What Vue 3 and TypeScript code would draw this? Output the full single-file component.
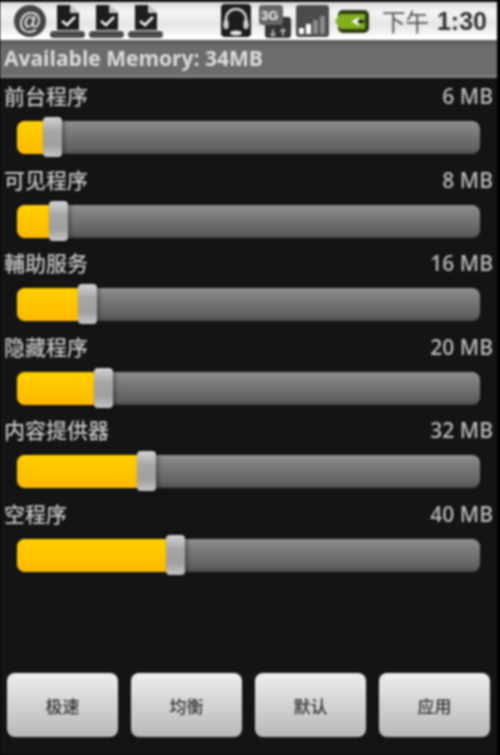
<script setup lang="ts">
const rows = [
  { name: '前台程序', value: '6 MB', thumb: 53 },
  { name: '可见程序', value: '8 MB', thumb: 59 },
  { name: '輔助服务', value: '16 MB', thumb: 88 },
  { name: '隐藏程序', value: '20 MB', thumb: 104 },
  { name: '内容提供器', value: '32 MB', thumb: 147 },
  { name: '空程序', value: '40 MB', thumb: 176 },
]
const buttons = ['极速', '均衡', '默认', '应用']
const docs = [0, 1, 2]
const bars = [
  { x: 3, y: 14, h: 6, c: '#fff' },
  { x: 10, y: 10, h: 10, c: '#fff' },
  { x: 17, y: 6, h: 14, c: '#8a8a8a' },
  { x: 24, y: 2, h: 18, c: '#8a8a8a' },
]
</script>

<template>
  <div class="screen">
    <header class="status">
      <div class="left-icons">
        <span class="at">@</span>
        <svg v-for="d in docs" :key="d" class="doc" viewBox="0 0 36 34" width="36" height="34">
          <path d="M7 1h13l9 8v17H7z" fill="#1c1c1c" />
          <path d="M20 1l9 8h-9z" fill="#c8c8c8" />
          <path d="M12 17l5 4 8-8" fill="none" stroke="#f4f4f4" stroke-width="2.6" />
          <rect x="0" y="27" width="35" height="7" rx="3.5" fill="#4a4a4a" />
        </svg>
      </div>
      <div class="right-icons">
        <svg class="headset" viewBox="0 0 30 34" width="30" height="34">
          <rect width="30" height="33" rx="4" fill="#1d1d1d" />
          <path d="M5 19v-4a10 10 0 0 1 20 0v4" fill="none" stroke="#cfcfcf" stroke-width="2.6" />
          <rect x="2.5" y="16" width="5" height="9" rx="2" fill="#cfcfcf" />
          <rect x="22.5" y="16" width="5" height="9" rx="2" fill="#cfcfcf" />
          <ellipse cx="15" cy="29" rx="6" ry="2.5" fill="#e8e8e8" />
        </svg>
        <svg class="net" viewBox="0 0 32 33" width="32" height="33">
          <rect x="6" y="12" width="26" height="21" rx="3" fill="#333" />
          <rect width="24" height="20" rx="3" fill="#666" />
          <text x="2" y="15" class="net-text">3G</text>
          <path d="M14 24v7M11.5 28.5l2.5 2.5 2.5-2.5M24 31v-7M21.500 26.500l2.500-2.500 2.500 2.500" fill="none" stroke="#aaa" stroke-width="1.8" />
        </svg>
        <svg class="signal" viewBox="0 0 33 32" width="33" height="32">
          <rect width="33" height="32" rx="3" fill="#4b4b4b" />
          <rect v-for="b in bars" :key="b.x" :x="b.x" :y="b.y + 9" :width="5" :height="b.h" :fill="b.c" />
        </svg>
        <svg class="battery" viewBox="0 0 34 26" width="34" height="26">
          <rect x="3" y="2" width="31" height="23" rx="5" fill="#2c3a14" />
          <path d="M0 13l5-7h25v15H5z" fill="#7fae1e" />
          <path d="M24 9l-8 4.500 8 4.500z" fill="#f2f2f2" />
          <rect x="23" y="12" width="6" height="3" fill="#1c2a0c" />
        </svg>
        <span class="clock"><span class="ampm">下午</span><b>1:30</b></span>
      </div>
    </header>
    <div class="title">Available Memory: 34MB</div>
    <main class="list">
      <section v-for="r in rows" :key="r.name" class="row">
        <div class="labels">
          <span class="name">{{ r.name }}</span>
          <span class="value">{{ r.value }}</span>
        </div>
        <div class="track">
          <div class="fill" :style="{ width: r.thumb - 17 + 'px' }"></div>
          <div class="thumb" :style="{ left: r.thumb - 10 - 17 + 'px' }"></div>
        </div>
      </section>
    </main>
    <footer class="actions">
      <button v-for="b in buttons" :key="b" class="btn" type="button">{{ b }}</button>
    </footer>
  </div>
</template>

<style>
html, body { margin: 0; background: #000; }
</style>

<style scoped>
.screen {
  width: 497px;
  height: 755px;
  background: #141414;
  padding-top: 2px;
  box-sizing: border-box;
  display: flex;
  flex-direction: column;
  font-family: "Open Sans", "Noto Sans CJK SC", sans-serif;
  filter: blur(0.8px);
  overflow: hidden;
}
.status {
  height: 38px;
  flex: none;
  background: linear-gradient(#d8d8d8 0, #f4f4f4 25%, #e6e6e6 60%, #ffffff 95%);
  display: flex;
  justify-content: space-between;
  align-items: center;
  padding: 0 10px 0 14px;
}
.left-icons { display: flex; align-items: center; gap: 3px; }
.at {
  width: 32px;
  height: 32px;
  border-radius: 50%;
  background: #444;
  color: #eee;
  display: flex;
  align-items: center;
  justify-content: center;
  font: 700 23px "Liberation Sans", sans-serif;
  margin-right: 1px;
}
.right-icons { display: flex; align-items: center; gap: 5px; }
.headset { margin-right: 3px; }
.net-text { font: 700 13px "Liberation Sans", sans-serif; fill: #f2f2f2; }
.battery { margin-left: 1px; }
.clock {
  color: #222;
  margin-left: 8px;
  white-space: nowrap;
  font-family: "Liberation Sans", "Noto Sans CJK SC", sans-serif;
  display: flex;
  align-items: center;
  gap: 8px;
}
.ampm { color: #555; font-weight: 400; font-size: 23.5px; }
.clock b { font-weight: 700; font-size: 25px; color: #333; }
.title {
  height: 38px;
  flex: none;
  background: linear-gradient(#5a5a5a, #6c6c6c 20%, #6c6c6c 90%, #8a8a8a);
  color: #dcdcdc;
  font-size: 21px;
  font-weight: 700;
  line-height: 37px;
  padding-left: 4px;
  white-space: nowrap;
}
.list { flex: 1; }
.row { height: 83.6px; box-sizing: border-box; padding: 6px 4px 0 0; }
.labels {
  display: flex;
  justify-content: space-between;
  height: 24px;
  line-height: 24px;
  padding-left: 4px;
  font-size: 21px;
  color: #c4c4c4;
}
.name { font-weight: 500; }
.value { font-weight: 600; color: #b8b8b8; }
.track {
  position: relative;
  margin: 13px 13px 0 17px;
  height: 33px;
  border-radius: 8px;
  background: linear-gradient(#8f8f8f 0, #7c7c7c 30%, #606060 85%, #4a4a4a 100%);
}
.fill {
  height: 100%;
  border-radius: 8px 0 0 8px;
  background: linear-gradient(#ffd000, #ffb900);
}
.thumb {
  position: absolute;
  top: -4px;
  width: 19px;
  height: 40px;
  border-radius: 4px;
  background: linear-gradient(#d4d4d4, #a6a6a6 35%, #a0a0a0 70%, #c6c6c6);
  box-shadow: 2px 0 4px rgba(0, 0, 0, 0.4);
}
.actions {
  display: flex;
  gap: 13px;
  padding: 0 7px 18px;
  flex: none;
}
.btn {
  width: 111px;
  height: 64px;
  border: none;
  padding: 0;
  border-radius: 8px;
  background: linear-gradient(#efefef, #d8d8d8 40%, #b8b8b8);
  color: #333;
  font-family: "Noto Sans CJK SC", sans-serif;
  font-size: 17px;
  font-weight: 500;
}
</style>
